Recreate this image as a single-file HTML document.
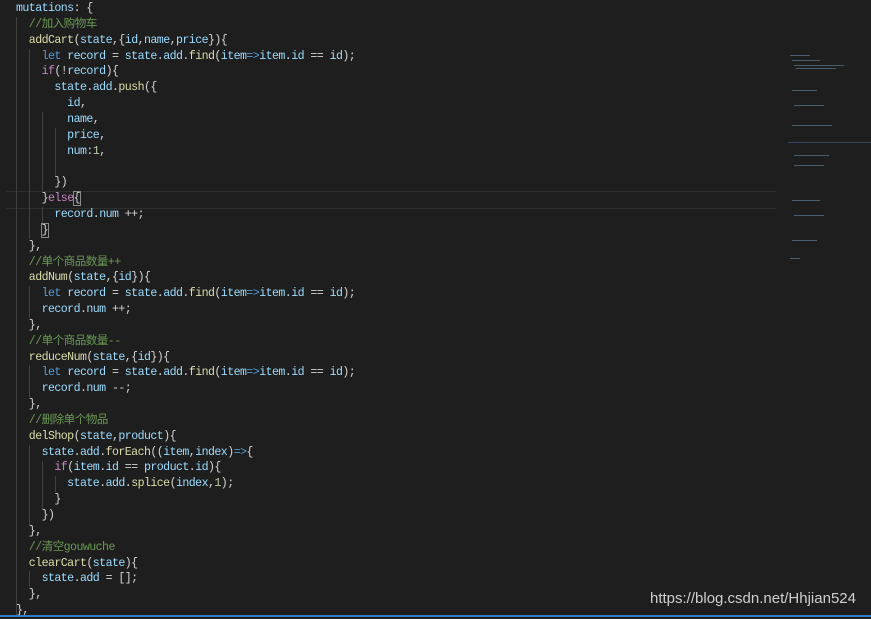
<!DOCTYPE html>
<html><head><meta charset="utf-8"><style>
body{margin:0;width:871px;height:617px;background:#1e1e1e;overflow:hidden;position:relative;font-family:"Liberation Mono","Noto Sans CJK SC",monospace;font-size:11.6px;letter-spacing:-0.56px;color:#9cdcfe}
.code{position:absolute;left:16px;top:1px;white-space:pre;line-height:15.84px}
.f{color:#dcdcaa}.c{color:#6a9955}.k{color:#569cd6}.p{color:#c586c0}.w{color:#d4d4d4}.n{color:#b5cea8}
.g{position:absolute;width:1px;background:#404040}
.hl{position:absolute;left:6px;width:770px;top:191px;height:16px;border-top:1px solid #2e2e2e;border-bottom:1px solid #2e2e2e}
.mm{position:absolute;height:1px;background:#5a7a90;opacity:.7}
.wm{position:absolute;left:650px;top:590px;font-family:"Liberation Sans",sans-serif;font-size:15px;letter-spacing:0;color:#cfcfcf}
.bar{position:absolute;left:0;top:615px;width:871px;height:2px;background:#2f7fd0}
.box{outline:1px solid #888}
</style></head><body>
<div class="hl"></div>
<div class="g" style="left:16px;top:17px;height:600px"></div>
<div class="g" style="left:29px;top:49px;height:190px"></div>
<div class="g" style="left:42px;top:112px;height:79px"></div>
<div class="g" style="left:55px;top:128px;height:48px"></div>
<div class="g" style="left:42px;top:207px;height:16px"></div>
<div class="g" style="left:29px;top:286px;height:32px"></div>
<div class="g" style="left:29px;top:365px;height:32px"></div>
<div class="g" style="left:29px;top:445px;height:80px"></div>
<div class="g" style="left:42px;top:461px;height:48px"></div>
<div class="g" style="left:55px;top:476px;height:16px"></div>
<div class="g" style="left:29px;top:571px;height:16px"></div>
<div class="code">mutations<span class="w">: {</span>
  <span class="c">//加入购物车</span>
  <span class="f">addCart</span><span class="w">(</span>state<span class="w">,{</span>id<span class="w">,</span>name<span class="w">,</span>price<span class="w">}){</span>
    <span class="k">let</span> record <span class="w">=</span> state<span class="w">.</span>add<span class="w">.</span><span class="f">find</span><span class="w">(</span>item<span class="k">=&gt;</span>item<span class="w">.</span>id <span class="w">==</span> id<span class="w">);</span>
    <span class="p">if</span><span class="w">(!</span>record<span class="w">){</span>
      state<span class="w">.</span>add<span class="w">.</span><span class="f">push</span><span class="w">({</span>
        id<span class="w">,</span>
        name<span class="w">,</span>
        price<span class="w">,</span>
        num<span class="w">:</span><span class="n">1</span><span class="w">,</span>

      <span class="w">})</span>
    <span class="w">}</span><span class="p">else</span><span class="w box">{</span>
      record<span class="w">.</span>num <span class="w">++;</span>
    <span class="w box">}</span>
  <span class="w">},</span>
  <span class="c">//单个商品数量++</span>
  <span class="f">addNum</span><span class="w">(</span>state<span class="w">,{</span>id<span class="w">}){</span>
    <span class="k">let</span> record <span class="w">=</span> state<span class="w">.</span>add<span class="w">.</span><span class="f">find</span><span class="w">(</span>item<span class="k">=&gt;</span>item<span class="w">.</span>id <span class="w">==</span> id<span class="w">);</span>
    record<span class="w">.</span>num <span class="w">++;</span>
  <span class="w">},</span>
  <span class="c">//单个商品数量--</span>
  <span class="f">reduceNum</span><span class="w">(</span>state<span class="w">,{</span>id<span class="w">}){</span>
    <span class="k">let</span> record <span class="w">=</span> state<span class="w">.</span>add<span class="w">.</span><span class="f">find</span><span class="w">(</span>item<span class="k">=&gt;</span>item<span class="w">.</span>id <span class="w">==</span> id<span class="w">);</span>
    record<span class="w">.</span>num <span class="w">--;</span>
  <span class="w">},</span>
  <span class="c">//删除单个物品</span>
  <span class="f">delShop</span><span class="w">(</span>state<span class="w">,</span>product<span class="w">){</span>
    state<span class="w">.</span>add<span class="w">.</span><span class="f">forEach</span><span class="w">((</span>item<span class="w">,</span>index<span class="w">)</span><span class="k">=&gt;</span><span class="w">{</span>
      <span class="p">if</span><span class="w">(</span>item<span class="w">.</span>id <span class="w">==</span> product<span class="w">.</span>id<span class="w">){</span>
        state<span class="w">.</span>add<span class="w">.</span><span class="f">splice</span><span class="w">(</span>index<span class="w">,</span><span class="n">1</span><span class="w">);</span>
      <span class="w">}</span>
    <span class="w">})</span>
  <span class="w">},</span>
  <span class="c">//清空gouwuche</span>
  <span class="f">clearCart</span><span class="w">(</span>state<span class="w">){</span>
    state<span class="w">.</span>add <span class="w">= [];</span>
  <span class="w">},</span>
<span class="w">},</span></div>
<div class="mm" style="left:788px;top:142px;width:83px;background:#3a5a80"></div>
<div class="mm" style="left:790px;top:55px;width:20px"></div>
<div class="mm" style="left:792px;top:60px;width:28px"></div>
<div class="mm" style="left:794px;top:65px;width:50px"></div>
<div class="mm" style="left:796px;top:68px;width:40px"></div>
<div class="mm" style="left:792px;top:90px;width:25px"></div>
<div class="mm" style="left:794px;top:105px;width:30px"></div>
<div class="mm" style="left:792px;top:125px;width:40px"></div>
<div class="mm" style="left:794px;top:155px;width:35px"></div>
<div class="mm" style="left:794px;top:165px;width:30px"></div>
<div class="mm" style="left:792px;top:200px;width:28px"></div>
<div class="mm" style="left:794px;top:215px;width:30px"></div>
<div class="mm" style="left:792px;top:240px;width:25px"></div>
<div class="mm" style="left:790px;top:258px;width:10px"></div>
<div class="wm">https://blog.csdn.net/Hhjian524</div>
<div class="bar"></div>
</body></html>
